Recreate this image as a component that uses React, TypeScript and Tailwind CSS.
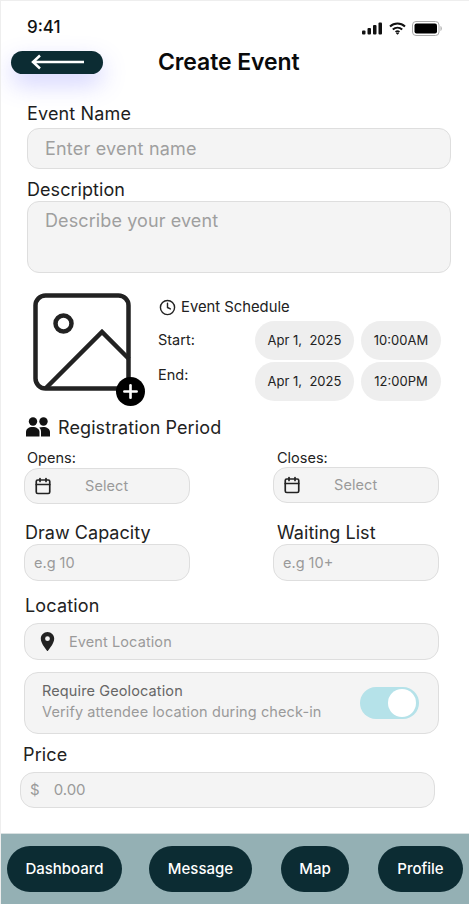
import { Calendar, Clock, Plus } from 'lucide-react';
import { MdLocationOn } from 'react-icons/md';

const field = 'bg-[#f4f4f4] border border-[#dedede] flex items-center';

function StatusIcons() {
    return (
        <div className="flex items-center gap-[6px]">
            <svg width="21" height="13" viewBox="0 0 21 13" fill="#111">
                <rect x="0" y="8.5" width="3.5" height="4" rx="1" />
                <rect x="5.5" y="6" width="3.5" height="6.5" rx="1" />
                <rect x="11" y="3" width="3.5" height="9.5" rx="1" />
                <rect x="16.5" y="0.5" width="3.5" height="12" rx="1" />
            </svg>
            <svg width="17" height="13" viewBox="0 0 17 13" fill="none" stroke="#111" strokeWidth="2">
                <path d="M1 4.6C5.3 .6 11.7 .6 16 4.6" />
                <path d="M3.8 7.5c2.7-2.4 6.7-2.4 9.4 0" />
                <path d="M6.6 10c1.1-.9 2.7-.9 3.8 0" />
                <path d="M8.5 12.8 6.9 11.2c.9-.7 2.3-.7 3.2 0z" fill="#111" stroke="none" />
            </svg>
            <svg width="30" height="15" viewBox="0 0 30 15" fill="none">
                <rect x="0.5" y="0.5" width="26.5" height="14" rx="3.5" stroke="#aaa" />
                <rect x="2.5" y="2.5" width="22.5" height="10" rx="2" fill="#000" />
                <path d="M28.5 5v5c.8-.3 1.3-1.4 1.3-2.5S29.3 5.300 28.500 5z" fill="#aaa" />
            </svg>
        </div>
    );
}

function PeopleIcon() {
    return (
        <svg width="24" height="20" viewBox="0 0 24 20" fill="#111">
            <circle cx="7" cy="4.500" r="4.200" />
            <circle cx="17.500" cy="4.500" r="4.200" />
            <path d="M0 19.500v-4.500c0-3 2.500-5 6.500-5s7 2 7 5v4.500z" />
            <path d="M15 19.500v-4.800c0-1.700-.6-3.100-1.700-4.200 1-.4 2.200-.6 3.700-.6 4 0 7 2 7 5v4.600z" />
        </svg>
    );
}

function ImagePlaceholder() {
    return (
        <div className="relative w-[111px] h-[112px] shrink-0">
            <svg width="98" height="98" viewBox="0 0 98 98" fill="none" stroke="#222" strokeWidth="4.500">
                <rect x="2.500" y="2.500" width="93" height="93" rx="10" />
                <circle cx="30.500" cy="30.500" r="8" />
                <path d="M13 95 69 39 96 66" />
            </svg>
            <div className="absolute left-[83px] top-[84px] w-[29px] h-[29px] rounded-full bg-black flex items-center justify-center">
                <Plus className="w-[21px] h-[21px] text-white" strokeWidth={3} />
            </div>
        </div>
    );
}

function Chip({ text, wide }: { text: string; wide?: boolean }) {
    return (
        <div className={`h-[39px] rounded-full bg-[#eeeeee] flex items-center justify-center whitespace-pre text-[13px] text-[#222] ${wide ? 'w-[99px]' : 'w-[80px]'}`}>
            {text}
        </div>
    );
}

function SelectBox({ className }: { className: string }) {
    return (
        <div className={`${field} w-[166px] h-[36px] rounded-[14px] pl-[9px] ${className}`}>
            <Calendar className="w-[18px] h-[18px] text-[#222]" strokeWidth={2.25} />
            <span className="ml-[33px] text-[14.500px] tracking-[0.1px] text-[#9a9a9a]">Select</span>
        </div>
    );
}

function NavButton({ label, className }: { label: string; className: string }) {
    return (
        <button className={`${className} h-[46px] rounded-full bg-[#0c2c33] text-white text-[15px] font-medium`}>
            {label}
        </button>
    );
}

export default function App() {
    return (
        <div className="w-[469px] h-[904px] bg-white flex flex-col overflow-hidden font-['Inter',sans-serif] border-l border-t border-[#eeeeee]">
            <div className="flex items-center justify-between pl-[26px] pr-[27px] pt-[16px] h-[38px]">
                <span className="text-[17px] font-medium text-[#111]">9:41</span>
                <StatusIcons />
            </div>

            <div className="relative flex items-center h-[24px] mt-[11px] pl-[10px]">
                <div className="w-[92px] h-[23px] rounded-full bg-[#0c2c33] flex items-center pl-[19px] shadow-[0_10px_24px_rgba(90,90,255,0.28)]">
                    <svg width="56" height="16" viewBox="0 0 56 16" fill="none" stroke="#fff" strokeWidth="2.500">
                        <path d="M54 8H3M10 1.500 3 8l7 6.500" />
                    </svg>
                </div>
                <h1 className="ml-[55px] text-[23px] font-semibold text-[#0a0a0a] tracking-[-0.1px]">Create Event</h1>
            </div>

            <label className="ml-[26px] mt-[28px] text-[18px] leading-[24px] tracking-[0.15px] text-[#1d1d1d]">Event Name</label>
            <div className={`${field} ml-[26px] mt-[2px] w-[424px] h-[41px] rounded-[12px] pl-[17px] text-[18px] tracking-[0.2px] text-[#9f9f9f]`}>
                Enter event name
            </div>

            <label className="ml-[26px] mt-[9px] text-[18px] leading-[24px] tracking-[0.05px] text-[#1d1d1d]">Description</label>
            <div className={`${field} !items-start ml-[26px] mt-[-1px] w-[424px] h-[72px] rounded-[12px] pl-[17px] pt-[5px] text-[18px] tracking-[0.1px] text-[#9f9f9f]`}>
                Describe your event
            </div>

            <div className="flex mt-[20px] ml-[32px]">
                <ImagePlaceholder />
                <div className="ml-[15px]">
                    <div className="flex items-center gap-[5px] h-[26px] mt-[1px] text-[14.800px] text-[#222]">
                        <Clock className="w-[17px] h-[17px]" strokeWidth={2} />
                        Event Schedule
                    </div>
                    <div className="flex mt-[1px]">
                        <span className="w-[97px] ml-[-1px] text-[14.500px] text-[#222] pt-[8px]">Start:</span>
                        <div className="flex gap-[7px]"><Chip text="Apr 1,  2025" wide /><Chip text="10:00AM" /></div>
                    </div>
                    <div className="flex mt-[2px]">
                        <span className="w-[97px] ml-[-1px] text-[14.500px] text-[#222] pt-[2px]">End:</span>
                        <div className="flex gap-[7px]"><Chip text="Apr 1,  2025" wide /><Chip text="12:00PM" /></div>
                    </div>
                </div>
            </div>

            <div className="flex items-center ml-[25px] mt-[8px] h-[28px] text-[18px] tracking-[0.1px] text-[#222]">
                <PeopleIcon />
                <span className="ml-[8px]">Registration Period</span>
            </div>

            <div className="flex mt-[8px] text-[14.500px] leading-[18px] text-[#222]">
                <span className="ml-[26px] w-[250px]">Opens:</span>
                <span>Closes:</span>
            </div>
            <div className="flex items-start mt-0 h-[37px]">
                <SelectBox className="ml-[23px] mt-[1px]" />
                <SelectBox className="ml-[83px]" />
            </div>

            <div className="flex mt-[17px] text-[18px] leading-[24px] tracking-[0.03px] text-[#222]">
                <span className="ml-[24px] w-[252px]">Draw Capacity</span>
                <span>Waiting List</span>
            </div>
            <div className="flex mt-[-1px]">
                <div className={`${field} ml-[23px] w-[166px] h-[37px] rounded-[14px] pl-[9px] text-[14.500px] text-[#9a9a9a]`}>e.g 10</div>
                <div className={`${field} ml-[83px] w-[166px] h-[37px] rounded-[14px] pl-[9px] text-[14.500px] text-[#9a9a9a]`}>e.g 10+</div>
            </div>

            <label className="ml-[24px] mt-[13px] text-[18px] leading-[24px] tracking-[0.15px] text-[#222]">Location</label>
            <div className={`${field} ml-[23px] mt-[5px] w-[415px] h-[37px] rounded-[14px] pl-[11px] text-[14.500px] tracking-[0.1px] text-[#9a9a9a]`}>
                <MdLocationOn className="w-[23px] h-[23px] text-[#222]" />
                <span className="ml-[10px]">Event Location</span>
            </div>

            <div className={`${field} justify-between ml-[23px] mt-[12px] w-[415px] h-[62px] rounded-[14px] pl-[17px] pr-[19px]`}>
                <div className="text-[14.500px] leading-[20.500px] tracking-[0.12px] pb-[3px]">
                    <p className="text-[#666666]">Require Geolocation</p>
                    <p className="text-[#9a9a9a]">Verify attendee location during check-in</p>
                </div>
                <div className="w-[59px] h-[32px] rounded-full bg-[#b5e2e9] flex items-center justify-end pr-[3px]">
                    <div className="w-[28px] h-[28px] rounded-full bg-white" />
                </div>
            </div>

            <label className="ml-[22px] mt-[9px] text-[18px] leading-[24px] tracking-[0.15px] text-[#222]">Price</label>
            <div className={`${field} ml-[19px] mt-[5px] w-[415px] h-[36px] rounded-[14px] pl-[9px] text-[15px] text-[#9a9a9a]`}>
                <span>$</span>
                <span className="ml-[14px]">0.00</span>
            </div>

            <div className="mt-auto h-[71px] bg-[#94b0b4] border-t border-[#d8e0e1] flex items-start pl-[6px] pt-[12px]">
                <NavButton label="Dashboard" className="w-[115px]" />
                <NavButton label="Message" className="w-[103px] ml-[27px]" />
                <NavButton label="Map" className="w-[68px] ml-[29px]" />
                <NavButton label="Profile" className="w-[85px] ml-[29px]" />
            </div>
        </div>
    );
}
